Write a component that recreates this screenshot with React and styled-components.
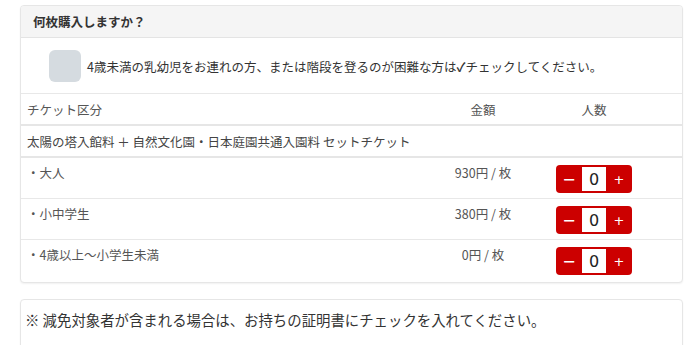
import styled, { createGlobalStyle } from "styled-components";

const GlobalStyle = createGlobalStyle`
  body {
    margin: 0;
    background: #fff;
    font-family: "Noto Sans CJK JP", "Noto Sans", sans-serif;
    color: #333;
  }
`

const tickets = [
    {name: "大人", price: "930円 / 枚"},
    {name: "小中学生", price: "380円 / 枚"},
    {name: "4歳以上～小学生未満", price: "0円 / 枚"},
]

const Stepper = ({value}) => {
    return <StepperBox>
        <StepButton>−</StepButton>
        <StepValue>{value}</StepValue>
        <StepButton small>+</StepButton>
    </StepperBox>
}

const App = () => {
    return <>
        <GlobalStyle/>
        <Page>
            <Card>
                <CardHeader>何枚購入しますか？</CardHeader>
                <InfantRow>
                    <CheckBox/>
                    <span>4歳未満の乳幼児をお連れの方、または階段を登るのが困難な方は<Tick>✓</Tick>チェックしてください。</span>
                </InfantRow>
                <HeadRow>
                    <span>チケット区分</span>
                    <Center>金額</Center>
                    <Center>人数</Center>
                </HeadRow>
                <ProductRow>太陽の塔入館料 ＋ 自然文化園・日本庭園共通入園料 セットチケット</ProductRow>
                {tickets.map((t, i) => (
                    <TicketRow key={t.name} last={i === tickets.length - 1}>
                        <CellText>・{t.name}</CellText>
                        <Center><CellText>{t.price}</CellText></Center>
                        <Center><Stepper value={0}/></Center>
                    </TicketRow>
                ))}
            </Card>
            <NoteCard>※ 減免対象者が含まれる場合は、お持ちの証明書にチェックを入れてください。</NoteCard>
        </Page>
    </>
}

const Page = styled.div`
  padding: 5px 17px 0 20px;
  display: flex;
  flex-direction: column;
  gap: 16px;
`

const Card = styled.div`
  border: 1px solid #e6e6e6;
  border-radius: 4px;
  box-shadow: 0 1px 2px rgba(0, 0, 0, 0.06);
  background: #fff;
  overflow: hidden;
`

const CardHeader = styled.div`
  height: 31px;
  display: flex;
  align-items: center;
  padding-left: 12px;
  background: #f5f5f5;
  border-bottom: 1px solid #e4e4e4;
  font-size: 12.5px;
  font-weight: bold;
  color: #333;
`

const InfantRow = styled.div`
  display: flex;
  align-items: center;
  gap: 6px;
  padding: 12px 0 11px 28px;
  font-size: 12.5px;
  color: #333;
  border-bottom: 1px solid #e8e8e8;
`

const CheckBox = styled.div`
  width: 32px;
  height: 32px;
  border-radius: 6px;
  background: #d5dbe0;
  flex-shrink: 0;
`

const Tick = styled.span`
  font-weight: bold;
`

const Grid = styled.div`
  display: grid;
  grid-template-columns: 1fr 110px 112px;
  padding: 0 32px 0 6px;
  font-size: 12.5px;
  color: #555;
`

const HeadRow = styled(Grid)`
  height: 30px;
  align-items: center;
  border-bottom: 2px solid #e6e6e6;
`

const ProductRow = styled.div`
  height: 30px;
  display: flex;
  align-items: center;
  padding-left: 6px;
  font-size: 12.5px;
  color: #444;
  border-bottom: 2px solid #e6e6e6;
`

const TicketRow = styled(Grid)`
  height: ${p => p.last ? 42 : 41}px;
  align-items: start;
  border-bottom: ${p => p.last ? "none" : "1px solid #e8e8e8"};
  padding-top: 7px;
  box-sizing: border-box;
`

const CellText = styled.span`
  line-height: 16px;
  white-space: pre;
`

const Center = styled.div`
  display: flex;
  justify-content: center;
`

const StepperBox = styled.div`
  display: flex;
  align-items: stretch;
  height: 28px;
  width: 76px;
  background: #cc0000;
  border-radius: 4px;
  padding: 2px 0;
  box-sizing: border-box;
`

const StepButton = styled.div`
  width: 26px;
  display: flex;
  align-items: center;
  justify-content: center;
  color: #fff;
  font-size: ${p => p.small ? 13 : 16}px;
  font-family: "DejaVu Sans", sans-serif;
`

const StepValue = styled.div`
  width: 24px;
  background: #fff;
  display: flex;
  align-items: center;
  justify-content: center;
  font-size: 16px;
  color: #222;
  font-family: "DejaVu Sans", sans-serif;
`

const NoteCard = styled.div`
  border: 1px solid #e6e6e6;
  border-radius: 4px;
  box-shadow: 0 1px 2px rgba(0, 0, 0, 0.06);
  padding: 9px 4px 40px;
  font-size: 14.4px;
  color: #333;
`

export default App;
